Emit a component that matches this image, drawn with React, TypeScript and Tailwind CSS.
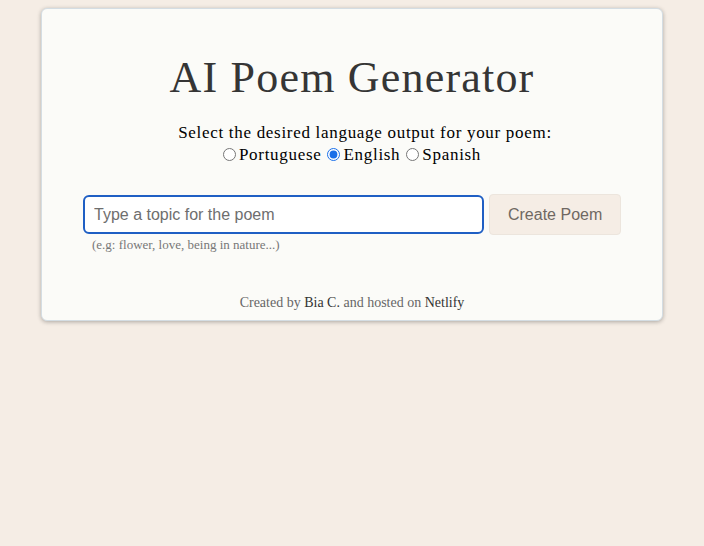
import React, { useState } from "react";

const serif = "font-['Liberation_Serif','DejaVu_Serif',serif]";
const sans = "font-['Liberation_Sans',Arial,sans-serif]";

export default function App() {
  const [lang, setLang] = useState("English");
  const [topic, setTopic] = useState("");

  return (
    <div className="min-h-[546px] bg-[#f5ede5] pt-2">
      <div className="mx-auto w-[622px] rounded-md border border-[#d4dde3] bg-[#fbfbf8] shadow-[0_1px_4px_rgba(0,0,0,0.3)]">
        <h1
          className={`${serif} pt-[44px] text-center text-[44px] leading-[50px] tracking-[1.2px] text-[#353535]`}
        >
          AI Poem Generator
        </h1>

        <div
          className={`${serif} mt-[19px] text-center text-[17px] leading-[21px] tracking-[0.7px] text-black`}
        >
          <div className="pl-[26px]">
            Select the desired language output for your poem:
          </div>
          <div className="mt-[1px] flex items-center justify-center gap-[6px]">
            {["Portuguese", "English", "Spanish"].map((l) => (
              <label key={l} className="flex items-center gap-[3px]">
                <input
                  type="radio"
                  name="lang"
                  checked={lang === l}
                  onChange={() => setLang(l)}
                  className="h-[13px] w-[13px] accent-[#1a6fe8]"
                />
                {l}
              </label>
            ))}
          </div>
        </div>

        <form
          className="mt-[29px] px-[41px]"
          onSubmit={(e) => e.preventDefault()}
        >
          <div className="flex items-center gap-[5px]">
            <input
              value={topic}
              onChange={(e) => setTopic(e.target.value)}
              placeholder="Type a topic for the poem"
              className={`${sans} h-[39px] w-[402px] rounded-[6px] border-2 border-[#1f5fc4] bg-white px-[9px] text-[16px] text-[#333] outline-none placeholder:text-[#6e6e6e]`}
            />
            <button
              type="submit"
              className={`${sans} h-[41px] w-[132px] rounded-[4px] border border-[#ece5dd] bg-[#f5ede5] text-[16px] text-[#6f6862]`}
            >
              Create Poem
            </button>
          </div>
          <div
            className={`${serif} mt-[1px] pl-[9px] text-[13px] leading-[17px] text-[#777]`}
          >
            (e.g: flower, love, being in nature...)
          </div>
        </form>

        <footer
          className={`${serif} pb-[8px] pt-[40px] text-center text-[14px] leading-[19px] text-[#666]`}
        >
          Created by <span className="text-[#333]">Bia C.</span> and hosted on{" "}
          <span className="text-[#333]">Netlify</span>
        </footer>
      </div>
    </div>
  );
}
